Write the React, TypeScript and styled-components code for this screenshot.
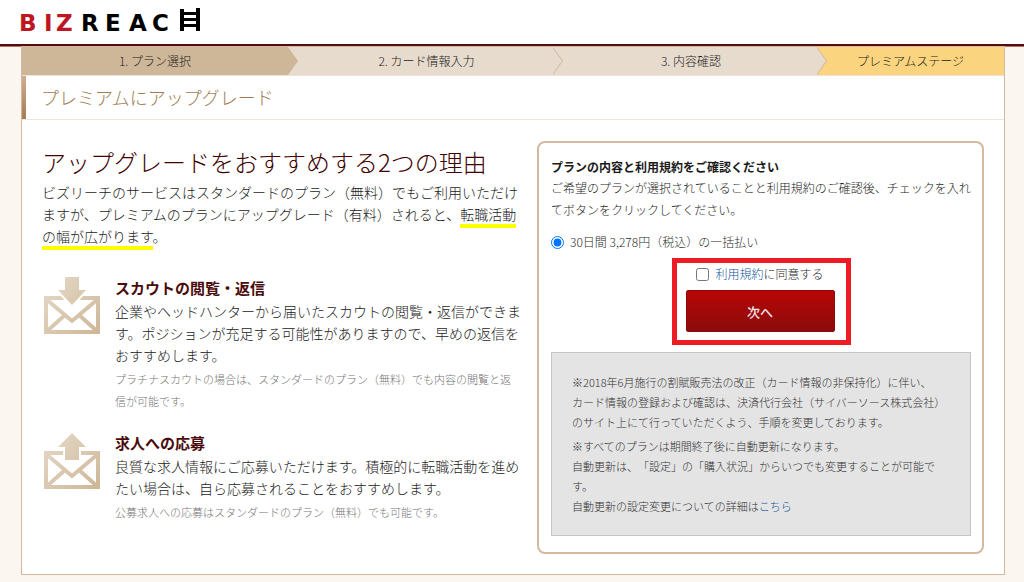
import React from 'react';
import styled, { createGlobalStyle } from 'styled-components';

const GlobalStyle = createGlobalStyle`
  *, *::before, *::after { box-sizing: border-box; }
  body {
    margin: 0;
    background: #fbf7f0;
    color: #1a1a1a;
    font-family: "Noto Sans CJK JP", sans-serif;
    font-size: 12px;
    font-weight: 300;
    line-height: 22px;
    text-spacing-trim: space-all;
  }
  h1, h2, h3, p, ol { margin: 0; padding: 0; }
  a { color: #0f559b; text-decoration: none; }
`;

const Header = styled.header`
  display: flex;
  padding: 8px 20px 11px;
  background: #fff;
  border-bottom: 2px solid #560b0e;
  box-shadow: 0 1px 0 #b5706a;
  svg { display: block; overflow: visible; }
`;

const LogoText = styled.text<{ $red?: boolean }>`
  font-family: "DejaVu Sans", sans-serif;
  font-size: 23px;
  font-weight: 700;
  fill: ${(p) => (p.$red ? '#be1622' : '#000')};
`;

const Sheet = styled.main`
  margin: 0 19px 8px 21px;
  background: #fff;
  border: 1px solid #d4b9a0;
`;

const Steps = styled.ol`
  display: grid;
  grid-template-columns: 266fr 265fr 264fr 187fr;
  list-style: none;
  border-bottom: 1px solid #eee2d6;
`;

const Step = styled.li<{ $bg: string; $edge?: string; $inset?: boolean }>`
  position: relative;
  height: 28px;
  line-height: 28px;
  padding-left: ${(p) => (p.$inset ? '12px' : '0')};
  text-align: center;
  white-space: nowrap;
  background: ${(p) => p.$bg};
  &::before, &::after {
    content: ${(p) => (p.$edge ? '""' : 'none')};
    position: absolute;
    z-index: 1;
    top: 0;
    left: 100%;
    width: 10px;
    height: 100%;
    background: ${(p) => p.$edge};
    clip-path: polygon(0 0, 100% 50%, 0 100%);
  }
  &::after {
    left: calc(100% - 1px);
    background: ${(p) => p.$bg};
  }
`;

const TitleBar = styled.div`
  display: flex;
  height: 44px;
  border-bottom: 1px solid #efe5dc;
  &::before {
    content: "";
    width: 4px;
    background: linear-gradient(#cfae8f, #a67c55);
  }
`;

const Title = styled.h1`
  padding-left: 15px;
  font-size: 18px;
  font-weight: 300;
  line-height: 42px;
  color: #a07c55;
`;

const Columns = styled.div`
  display: grid;
  grid-template-columns: minmax(0, 480fr) minmax(0, 447fr);
  gap: 15px;
  padding: 21px 20px 20px;
`;

const Reasons = styled.section`
  padding-top: 5px;
  font-size: 14px;
`;

const ReasonsTitle = styled.h2`
  margin-bottom: 3px;
  font-size: 24px;
  font-weight: 300;
  line-height: 32px;
  color: #400000;
`;

const Highlight = styled.span`
  border-bottom: 4px solid #ff0;
`;

const Reason = styled.article<{ $first?: boolean }>`
  display: flex;
  gap: 14px;
  margin-top: ${(p) => (p.$first ? '30px' : '20px')};
  > svg { flex: none; }
`;

const ReasonTitle = styled.h3`
  margin-bottom: 1px;
  font-size: 15px;
  font-weight: 700;
  color: #4a0b0b;
`;

const Small = styled.p`
  margin-top: 2px;
  padding-right: 8px;
  font-size: 11px;
  color: #777;
`;

const Panel = styled.form`
  padding: 14px 11px 16px 12px;
  border: 2px solid #d4b9a0;
  border-radius: 8px;
`;

const PanelTitle = styled.h2`
  font-size: 12px;
  font-weight: 700;
  line-height: 20px;
`;

const Choice = styled.label<{ $center?: boolean }>`
  display: flex;
  align-items: center;
  justify-content: ${(p) => (p.$center ? 'center' : 'flex-start')};
  gap: 6px;
  margin-top: ${(p) => (p.$center ? '0' : '10px')};
  color: #2a2a2a;
  input { width: 13px; height: 13px; margin: 0; }
`;

const Callout = styled.div`
  width: 179px;
  margin: 5px auto 7px;
  padding: 0 11px 8px 9px;
  border: 5px solid #ed1c24;
`;

const Submit = styled.button`
  display: block;
  width: 100%;
  height: 42px;
  margin-top: 5px;
  border: 1px solid #8d0a0a;
  border-radius: 2px;
  background: linear-gradient(#b80505, #8b0c0c);
  color: #f3e6e6;
  font: 500 13px "Noto Sans CJK JP", sans-serif;
`;

const Notes = styled.div`
  padding: 19px 20px;
  border: 1px solid #c4c4c4;
  background: #e4e4e4;
  font-size: 11px;
  line-height: 20px;
  color: #333;
  p + p { margin-top: 4px; }
`;

function Logo() {
  return (
    <svg width="182" height="25" viewBox="0 0 182 25" role="img" aria-label="BIZREACH">
      <LogoText $red x="-1 24 36" y="23">BIZ</LogoText>
      <LogoText x="61 85 109 132" y="23">REAC</LogoText>
      <g fill="#000">
        <rect x="160" y="1" width="4" height="22" />
        <rect x="176" y="0" width="4" height="23" />
        <rect x="161" y="4" width="18" height="3" />
        <rect x="161" y="10" width="18" height="3" />
        <rect x="161" y="16" width="18" height="3" />
      </g>
    </svg>
  );
}

function MailIcon({ up }: { up?: boolean }) {
  const id = up ? 'mail-up' : 'mail-down';
  return (
    <svg width="59" height="59" viewBox="0 0 59 59" aria-hidden="true">
      <defs>
        <linearGradient id={id} gradientUnits="userSpaceOnUse" x1="0" y1="0" x2="59" y2="59">
          <stop offset="0" stopColor="#e6dccb" />
          <stop offset="1" stopColor="#cdb595" />
        </linearGradient>
      </defs>
      <rect x="4" y="21" width="52" height="34" fill="#fff" stroke={`url(#${id})`} strokeWidth="4" />
      <path d="M4 22 L30 44 L56 22 M4 55 L23 38 M56 55 L37 38" fill="none" stroke={`url(#${id})`} strokeWidth="4" />
      <path
        d={up ? 'M30 1 L44 15 H37 V28 H23 V15 H16 Z' : 'M23 0 H37 V13 H44 L30 28 L16 13 H23 Z'}
        fill={`url(#${id})`}
        stroke="#fff"
        strokeWidth="4"
        paintOrder="stroke"
      />
    </svg>
  );
}

export default function App() {
  return (
    <>
      <GlobalStyle />
      <Header>
        <Logo />
      </Header>
      <Sheet>
        <Steps>
          <Step $bg="#ceb798" $edge="#ceb798">1. プラン選択</Step>
          <Step $bg="#e7dbcd" $edge="#cdb99a" $inset>2. カード情報入力</Step>
          <Step $bg="#e7dbcd" $edge="#cdb99a" $inset>3. 内容確認</Step>
          <Step $bg="#fbd47f">プレミアムステージ</Step>
        </Steps>
        <TitleBar>
          <Title>プレミアムにアップグレード</Title>
        </TitleBar>
        <Columns>
          <Reasons>
            <ReasonsTitle>アップグレードをおすすめする2つの理由</ReasonsTitle>
            <p>
              ビズリーチのサービスはスタンダードのプラン（無料）でもご利用いただけますが、プレミアムのプランにアップグレード（有料）されると、<Highlight>転職活動の幅が広がります</Highlight>。
            </p>
            <Reason $first>
              <MailIcon />
              <div>
                <ReasonTitle>スカウトの閲覧・返信</ReasonTitle>
                <p>企業やヘッドハンターから届いたスカウトの閲覧・返信ができます。ポジションが充足する可能性がありますので、早めの返信をおすすめします。</p>
                <Small>プラチナスカウトの場合は、スタンダードのプラン（無料）でも内容の閲覧と返信が可能です。</Small>
              </div>
            </Reason>
            <Reason>
              <MailIcon up />
              <div>
                <ReasonTitle>求人への応募</ReasonTitle>
                <p>良質な求人情報にご応募いただけます。積極的に転職活動を進めたい場合は、自ら応募されることをおすすめします。</p>
                <Small>公募求人への応募はスタンダードのプラン（無料）でも可能です。</Small>
              </div>
            </Reason>
          </Reasons>
          <Panel onSubmit={(e) => e.preventDefault()}>
            <PanelTitle>プランの内容と利用規約をご確認ください</PanelTitle>
            <p>ご希望のプランが選択されていることと利用規約のご確認後、チェックを入れてボタンをクリックしてください。</p>
            <Choice>
              <input type="radio" name="plan" defaultChecked />
              <span>30日間 3,278円（税込）の一括払い</span>
            </Choice>
            <Callout>
              <Choice $center>
                <input type="checkbox" name="agree" />
                <span><a href="#terms">利用規約</a>に同意する</span>
              </Choice>
              <Submit type="submit">次へ</Submit>
            </Callout>
            <Notes>
              <p>
                ※2018年6月施行の割賦販売法の改正（カード情報の非保持化）に伴い、
                <br />
                カード情報の登録および確認は、決済代行会社（サイバーソース株式会社）のサイト上にて行っていただくよう、手順を変更しております。
              </p>
              <p>
                ※すべてのプランは期間終了後に自動更新になります。
                <br />
                自動更新は、「設定」の「購入状況」からいつでも変更することが可能です。
                <br />
                自動更新の設定変更についての詳細は<a href="#details">こちら</a>
              </p>
            </Notes>
          </Panel>
        </Columns>
      </Sheet>
    </>
  );
}
